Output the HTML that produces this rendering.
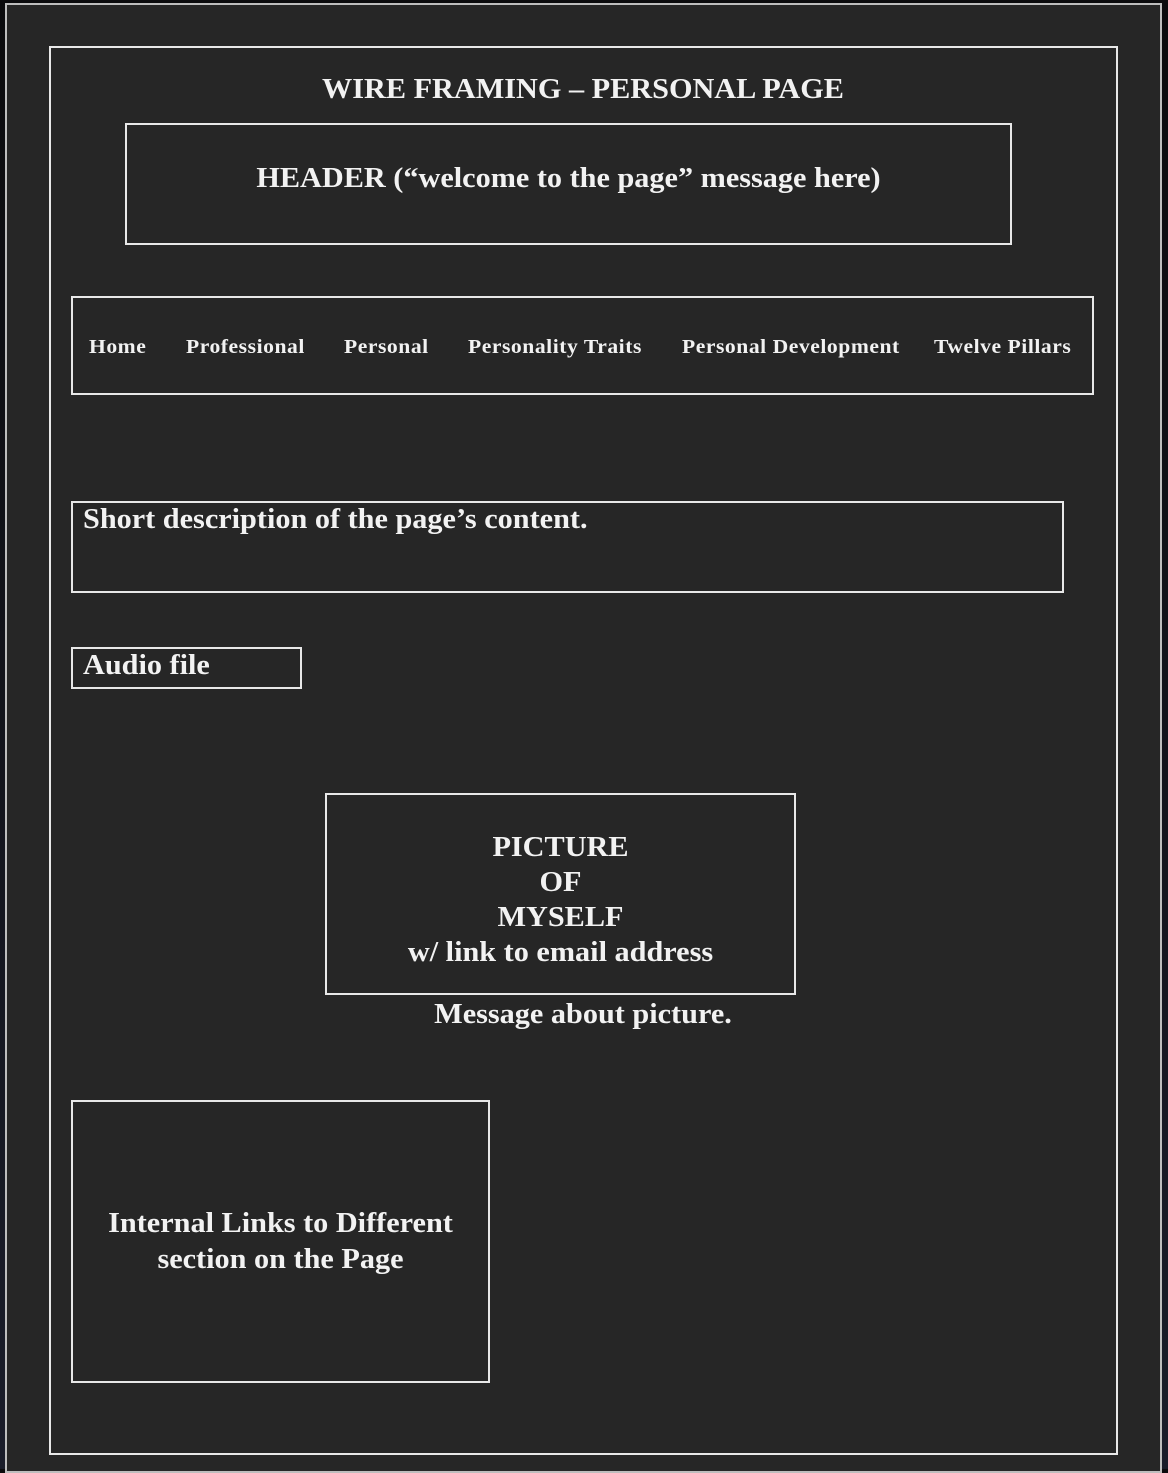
<!DOCTYPE html>
<html><head><meta charset="utf-8"><style>
html,body{margin:0;padding:0;}
body{width:1168px;height:1469px;background:linear-gradient(#0b0b0d,#1a1d2a);position:relative;overflow:hidden;font-family:"Liberation Serif",serif;font-weight:bold;color:#f2f2f2;}
.b{position:absolute;box-sizing:border-box;border:2px solid #e8e8e8;}
.t{position:absolute;white-space:nowrap;line-height:1;transform:scaleX(1.08);transform-origin:0 0;}
.c{transform-origin:50% 0;}
</style></head><body>
<div class="b" style="left:5px;top:3px;width:1157px;height:1470px;background:#262626;border-color:#bdbdbd"></div>
<div class="b" style="left:49px;top:46px;width:1069px;height:1409px;"></div>
<div class="t c" style="left:0;width:1166px;text-align:center;top:76px;font-size:28px;">WIRE FRAMING – PERSONAL PAGE</div>
<div class="b" style="left:125px;top:123px;width:887px;height:122px;"></div>
<div class="t c" style="left:125px;width:887px;text-align:center;top:165px;font-size:28px;">HEADER (“welcome to the page” message here)</div>
<div class="b" style="left:71px;top:296px;width:1023px;height:99px;"></div>
<div class="t" style="left:89px;top:337px;font-size:20px;letter-spacing:0.5px">Home</div>
<div class="t" style="left:186px;top:337px;font-size:20px;letter-spacing:0.5px">Professional</div>
<div class="t" style="left:344px;top:337px;font-size:20px;letter-spacing:0.5px">Personal</div>
<div class="t" style="left:468px;top:337px;font-size:20px;letter-spacing:0.5px">Personality Traits</div>
<div class="t" style="left:682px;top:337px;font-size:20px;letter-spacing:0.5px">Personal Development</div>
<div class="t" style="left:934px;top:337px;font-size:20px;letter-spacing:0.5px">Twelve Pillars</div>
<div class="b" style="left:71px;top:501px;width:993px;height:92px;"></div>
<div class="t" style="left:83px;top:506px;font-size:28px;">Short description of the page’s content.</div>
<div class="b" style="left:71px;top:647px;width:231px;height:42px;"></div>
<div class="t" style="left:83px;top:652px;font-size:28px;">Audio file</div>
<div class="b" style="left:325px;top:793px;width:471px;height:202px;"></div>
<div class="t c" style="left:325px;width:471px;text-align:center;top:830px;font-size:28px;line-height:35px;white-space:normal">PICTURE<br>OF<br>MYSELF<br>w/ link to email address</div>
<div class="t c" style="left:325px;width:516px;text-align:center;top:1001px;font-size:28px;">Message about picture.</div>
<div class="b" style="left:71px;top:1100px;width:419px;height:283px;"></div>
<div class="t c" style="left:71px;width:419px;text-align:center;top:1206px;font-size:28px;line-height:36px;white-space:normal">Internal Links to Different<br>section on the Page</div>
</body></html>
